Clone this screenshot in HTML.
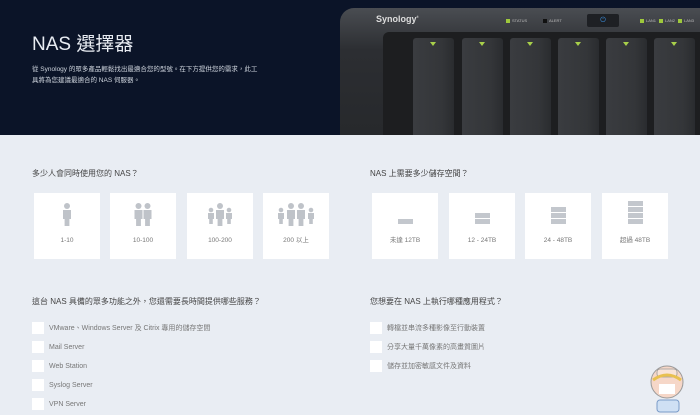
<!DOCTYPE html>
<html><head><meta charset="utf-8"><style>
*{margin:0;padding:0;box-sizing:border-box}
body{width:700px;height:415px;overflow:hidden;background:#e9edf3;font-family:"Liberation Sans","Noto Sans CJK TC",sans-serif;position:relative}
.hdr{position:absolute;left:0;top:0;width:700px;height:135px;background:#0b1428;overflow:hidden}
.t{position:absolute;color:#e8ecf2}
.nas{position:absolute;left:340px;top:8px;width:380px;height:140px;border-radius:14px 0 0 0;background:linear-gradient(#4a4d52,#2c2e32 30%,#26282b)}
.inner{position:absolute;left:383px;top:32px;width:330px;height:110px;background:#1d1e20;border-radius:6px 0 0 0}
.bay{position:absolute;top:38px;width:41px;height:100px;background:linear-gradient(90deg,#3a3c40,#343639 70%,#2a2c2f);border-radius:3px}
.bay i{position:absolute;left:17px;top:4px;width:0;height:0;border-left:3px solid transparent;border-right:3px solid transparent;border-top:4px solid #a8d04a}
.led{position:absolute;top:19px;width:4px;height:4px;background:#9ec83c}
.lt{position:absolute;top:18px;font-size:4px;color:#bbb}
.q{position:absolute;font-size:8px;color:#444;line-height:10px}
.card{position:absolute;top:193px;width:66px;height:66px;background:#fff}
.card span{position:absolute;left:0;right:0;top:44px;text-align:center;font-size:6.5px;line-height:8px;color:#777;white-space:nowrap}
.card svg{position:absolute;left:0;top:0}
.cb{position:absolute;width:12px;height:12px;background:#fff}
.cl{position:absolute;font-size:7px;color:#777;line-height:9px}
</style></head><body>
<div class="hdr">
<div class="t" style="left:32px;top:29px;font-size:19px">NAS 選擇器</div>
<div class="t" style="left:32px;top:64px;font-size:6.5px;line-height:11px;color:#cfd5de">從 Synology 的眾多產品輕鬆找出最適合您的型號。在下方提供您的需求，此工<br>具將為您建議最適合的 NAS 伺服器。</div>
<div class="nas"></div>
<div style="position:absolute;left:376px;top:14px;font-size:9px;font-weight:bold;color:#ddd">Synology<sup style="font-size:3px">®</sup></div>
<div class="led" style="left:506px"></div><div class="lt" style="left:512px">STATUS</div>
<div class="led" style="left:543px;background:#111"></div><div class="lt" style="left:549px">ALERT</div>
<div style="position:absolute;left:587px;top:14px;width:32px;height:13px;background:#1e2024;border-radius:2px;color:#3b8fe0;font-size:7px;text-align:center;line-height:13px">⏻</div>
<div class="led" style="left:640px"></div><div class="lt" style="left:646px">LAN1</div>
<div class="led" style="left:659px"></div><div class="lt" style="left:665px">LAN2</div>
<div class="led" style="left:678px"></div><div class="lt" style="left:684px">LAN3</div>
<div class="inner"></div>
<div class="bay" style="left:413px"><i></i></div>
<div class="bay" style="left:462px"><i></i></div>
<div class="bay" style="left:510px"><i></i></div>
<div class="bay" style="left:558px"><i></i></div>
<div class="bay" style="left:606px"><i></i></div>
<div class="bay" style="left:654px"><i></i></div>
</div>

<div class="q" style="left:32px;top:169px">多少人會同時使用您的 NAS？</div>
<div class="q" style="left:370px;top:169px">NAS 上需要多少儲存空間？</div>

<svg width="0" height="0" style="position:absolute"><defs><g id="p" fill="#bfc3c9"><circle cx="0" cy="-9" r="3"/><path d="M-4,-5h8v9h-1.6v7h-4.8v-7h-1.6z"/></g><g id="s" fill="#bfc3c9"><circle cx="0" cy="-5" r="2.3"/><path d="M-3,-2h6v6h-1.2v5h-3.6v-5h-1.2z"/></g></defs></svg>

<div class="card" style="left:34px"><svg width="66" height="45"><use href="#p" x="33" y="22"/></svg><span>1-10</span></div>
<div class="card" style="left:110px"><svg width="66" height="45"><use href="#p" x="28.5" y="22"/><use href="#p" x="37.5" y="22"/></svg><span>10-100</span></div>
<div class="card" style="left:187px"><svg width="66" height="45"><use href="#s" x="24" y="22"/><use href="#p" x="33" y="22"/><use href="#s" x="42" y="22"/></svg><span>100-200</span></div>
<div class="card" style="left:263px"><svg width="66" height="45"><use href="#s" x="18" y="22"/><use href="#p" x="28" y="22"/><use href="#p" x="38" y="22"/><use href="#s" x="48" y="22"/></svg><span>200 以上</span></div>

<div class="card" style="left:372px"><svg width="66" height="45" fill="#c3c7cd"><rect x="26" y="26" width="15" height="5"/></svg><span>未達 12TB</span></div>
<div class="card" style="left:449px"><svg width="66" height="45" fill="#c3c7cd"><rect x="26" y="20" width="15" height="5"/><rect x="26" y="26" width="15" height="5"/></svg><span>12 - 24TB</span></div>
<div class="card" style="left:525px"><svg width="66" height="45" fill="#c3c7cd"><rect x="26" y="14" width="15" height="5"/><rect x="26" y="20" width="15" height="5"/><rect x="26" y="26" width="15" height="5"/></svg><span>24 - 48TB</span></div>
<div class="card" style="left:602px"><svg width="66" height="45" fill="#c3c7cd"><rect x="26" y="8" width="15" height="5"/><rect x="26" y="14" width="15" height="5"/><rect x="26" y="20" width="15" height="5"/><rect x="26" y="26" width="15" height="5"/></svg><span>超過 48TB</span></div>

<div class="q" style="left:32px;top:297px">這台 NAS 具備的眾多功能之外，您還需要長時間提供哪些服務？</div>
<div class="q" style="left:370px;top:297px">您想要在 NAS 上執行哪種應用程式？</div>

<div class="cb" style="left:32px;top:322px"></div><div class="cl" style="left:49px;top:324px">VMware、Windows Server 及 Citrix 專用的儲存空間</div>
<div class="cb" style="left:32px;top:341px"></div><div class="cl" style="left:49px;top:343px">Mail Server</div>
<div class="cb" style="left:32px;top:360px"></div><div class="cl" style="left:49px;top:362px">Web Station</div>
<div class="cb" style="left:32px;top:379px"></div><div class="cl" style="left:49px;top:381px">Syslog Server</div>
<div class="cb" style="left:32px;top:398px"></div><div class="cl" style="left:49px;top:400px">VPN Server</div>

<div class="cb" style="left:370px;top:322px"></div><div class="cl" style="left:387px;top:324px">轉檔並串流多種影像至行動裝置</div>
<div class="cb" style="left:370px;top:341px"></div><div class="cl" style="left:387px;top:343px">分享大量千萬像素的高畫質圖片</div>
<div class="cb" style="left:370px;top:360px"></div><div class="cl" style="left:387px;top:362px">儲存並加密敏感文件及資料</div>

<svg style="position:absolute;left:645px;top:360px" width="50" height="55"><circle cx="22" cy="22" r="16" fill="#f6d7c8" stroke="#999" stroke-width="1"/><rect x="12" y="9" width="20" height="8" rx="3" fill="#f9e4d8" stroke="#999" stroke-width=".8"/><rect x="14" y="24" width="16" height="10" fill="#fff"/><path d="M8,20 q14,-10 28,0" stroke="#e8c050" stroke-width="3" fill="none"/><rect x="12" y="40" width="22" height="12" rx="3" fill="#cfe0f4" stroke="#7a9bc8"/></svg>
</body></html>
